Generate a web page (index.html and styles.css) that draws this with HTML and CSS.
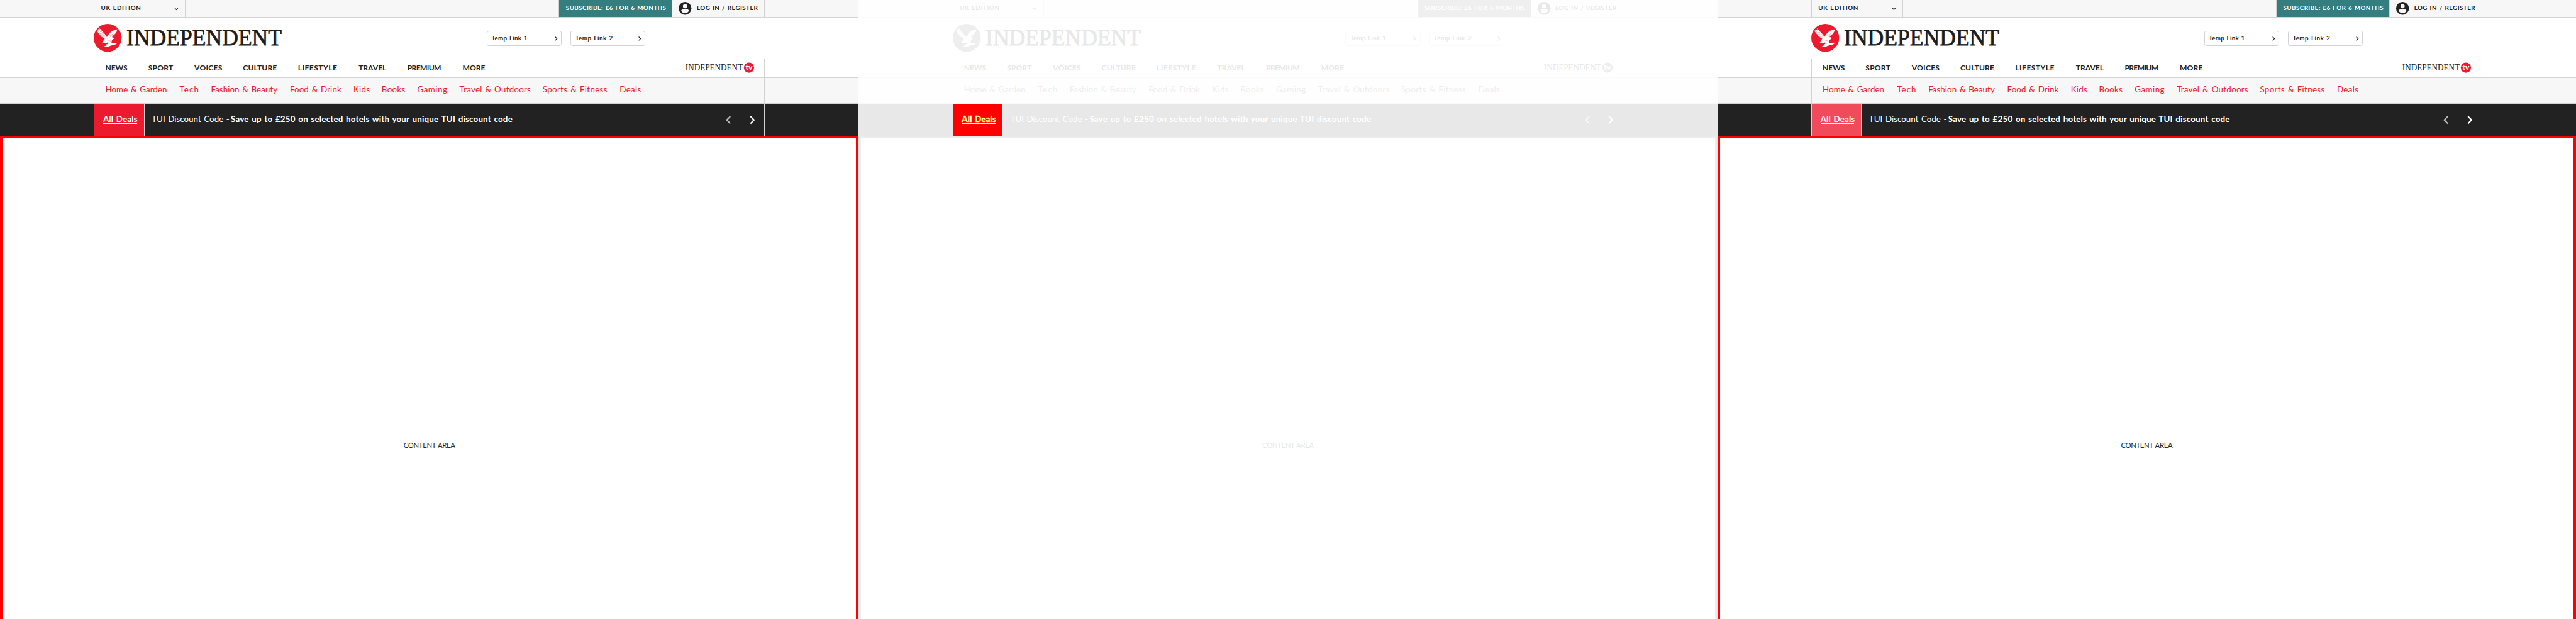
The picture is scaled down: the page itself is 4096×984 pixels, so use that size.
FILE: index.html
```
<!DOCTYPE html>
<html lang="en">
<head>
<meta charset="utf-8">
<title>Independent header</title>
<link rel="stylesheet" href="styles.css">
</head>
<body>
<main class="board">
  <section class="panel">
    <div class="bar topbar"><div class="wrap">
      <div class="edition"><span data-w="73">UK EDITION</span><svg class="chev-down" viewBox="0 0 8 5"><path d="M.8.5 4 4 7.2.5"/></svg></div>
      <div class="subscribe"><span data-w="185.5">SUBSCRIBE: £6 FOR 6 MONTHS</span></div>
      <div class="login">
        <svg class="avatar" viewBox="0 0 24 24"><circle class="disc" cx="12" cy="12" r="12"/><circle class="hole" cx="12" cy="8" r="4"/><path class="hole" d="M4.9 16.6C5 14 9.6 13 12 13s7 1 7.100 3.600C17.600 19.500 15 21 12 21s-5.600-1.500-7.100-4.400z"/></svg>
        <span data-w="112.500">LOG IN / REGISTER</span>
      </div>
    </div></div>
    <div class="bar masthead"><div class="wrap">
      <svg class="logo" viewBox="0 0 352 52">
        <circle class="logo-disc" cx="26" cy="26" r="26"/>
        <path class="eagle" d="M11 8l4 5 4 4 3.500 4 2 3.500 2.500-4 3-3.500 4.500-4L44 10l-1.500 5-3 4-4 3.500L34 25l2 0 2 2-1.500 1-2 1.500L33 33l.5 3 3.500 0 5-1 1 1.500-3 2-6 1.500-6 2-4 1.500-3.500-.5-.5-1.500 4-1.500-1-1.500 3-1 0-3-3 1-7.500-.5 3-2-1.500-1 3-2-1-.5 1.500-2-6-3.500-5-6L6.500 14l1 0L6 11l2.500 2L8 9l3 3.500z"/>
        <path class="feather" d="M9 14l9 12M11 13l9 11M14 14l8 9M29 23l9-6M31 24l7-4M25 30l7 2"/>
        <text class="wordmark" x="61" y="39.300" textLength="289.500" lengthAdjust="spacingAndGlyphs">INDEPENDENT</text>
      </svg>
      <div class="temps">
        <div class="temp"><span data-w="65.500">Temp Link 1</span><svg class="chev" viewBox="0 0 5 8"><path d="M.7.5 4.200 4 .7 7.500"/></svg></div>
        <div class="temp"><span data-w="68.500">Temp Link 2</span><svg class="chev" viewBox="0 0 5 8"><path d="M.7.5 4.200 4 .7 7.500"/></svg></div>
      </div>
    </div></div>
    <div class="bar nav"><div class="wrap">
      <div class="nav-items">
        <span data-w="40">NEWS</span><span data-w="45">SPORT</span><span data-w="50.500">VOICES</span><span data-w="62">CULTURE</span><span data-w="71.500">LIFESTYLE</span><span data-w="50.500">TRAVEL</span><span data-w="61.500">PREMIUM</span><span data-w="41">MORE</span>
      </div>
      <svg class="tv" viewBox="0 0 130 20">
        <text class="tv-word" x="1" y="15.300" textLength="107" lengthAdjust="spacingAndGlyphs">INDEPENDENT</text>
        <circle class="logo-disc" cx="119.500" cy="10" r="9.500"/>
        <text class="tv-mark" x="119.500" y="14.500" text-anchor="middle">tv</text>
      </svg>
    </div></div>
    <div class="bar subnav"><div class="wrap">
      <div class="sub-items">
        <span data-w="113.500">Home &amp; Garden</span><span data-w="34">Tech</span><span data-w="122.500">Fashion &amp; Beauty</span><span data-w="94.500">Food &amp; Drink</span><span data-w="29">Kids</span><span data-w="42.500">Books</span><span data-w="54">Gaming</span><span data-w="131.500">Travel &amp; Outdoors</span><span data-w="119">Sports &amp; Fitness</span><span data-w="38.500">Deals</span>
      </div>
    </div></div>
    <div class="bar deals"><div class="wrap">
      <a class="all-deals"><span data-w="62.500">All Deals</span></a>
      <div class="ticker"><span data-w="143.500">TUI Discount Code -</span><b data-w="525.500">Save up to £250 on selected hotels with your unique TUI discount code</b></div>
      <div class="arrows">
        <svg class="prev" viewBox="0 0 10 16"><path d="M8.500 1.200 1.800 8l6.700 6.800"/></svg>
        <svg class="next" viewBox="0 0 10 16"><path d="M1.500 1.200l6.700 6.800-6.700 6.800"/></svg>
      </div>
    </div></div>
    <div class="content"><span data-w="96">CONTENT AREA</span></div>
  </section>
</main>
<script src="board.js"></script>
</body>
</html>
```
FILE: board.js
```
// One header, three states: default, changed pixels, hover.
const board = document.querySelector('.board');
const base = board.querySelector('.panel');
for (const state of ['diff', 'hover']) {
  const copy = base.cloneNode(true);
  copy.classList.add(state);
  board.append(copy);
}

// Track each label out to its set width, with slightly widened word spaces.
const WORD = 0.09;
const ctx = document.createElement('canvas').getContext('2d');
for (const el of document.querySelectorAll('[data-w]')) {
  const cs = getComputedStyle(el);
  const text = el.textContent;
  ctx.font = `${cs.fontWeight} 100px Lato`;
  const words = text.split(' ').length - 1;
  const em = ctx.measureText(text).width / 100 + words * WORD;
  const size = parseFloat(cs.fontSize);
  const gap = (parseFloat(el.dataset.w) + size * 0.1 - em * size) / (text.length - 1);
  el.style.letterSpacing = `${(gap / size).toFixed(4)}em`;
  el.style.wordSpacing = `${WORD}em`;
}
```
FILE: styles.css
```
* { box-sizing: border-box; }
body { margin: 0; overflow: hidden; background: #fff; }
.board {
  zoom: 0.853333;
  display: flex;
  width: 4800px;
  height: 1154px;
  overflow: hidden;
  font-family: Lato, "Noto Sans", sans-serif;
}
.panel {
  --ink: #222;
  --word: #1d1d1b;
  --red: #ec1a2e;
  --deal: #ec1a2e;
  --frame: #f00;
  --line: #d3d3d3;
  --tint: #f7f7f7;
  --teal: #347e80;
  --dim: #bbb;
  width: 1600px;
  height: 1154px;
  flex: none;
  display: flex;
  flex-direction: column;
  color: var(--ink);
  background: #fff;
  white-space: nowrap;
}
.hover { --deal: #f04a5b; }
.diff {
  --ink: #e8e8e8;
  --word: #e8e8e8;
  --red: #eee;
  --deal: #f00;
  --frame: #ebebeb;
  --line: #fafafa;
  --tint: #fefefe;
  --teal: #efefef;
  --dim: #f7f7f7;
}
svg { display: block; flex: none; overflow: visible; }
.bar { border-bottom: 1px solid var(--line); flex: none; }
.wrap {
  width: 1250px;
  height: 100%;
  margin: 0 auto;
  display: flex;
  border: solid var(--line);
  border-width: 0 1px;
}

.topbar { height: 33px; background: var(--tint); font-weight: 700; font-size: 11.500px; line-height: 30px; }
.edition { width: 169.500px; padding: 0 12px; display: flex; justify-content: space-between; border-right: 1px solid var(--line); }
.chev-down { width: 8px; height: 5px; margin-top: 13.500px; }
.chev-down path, .chev path { fill: none; stroke: var(--ink); stroke-width: 1.500; }
.subscribe { width: 211px; margin-left: auto; padding-left: 12.500px; background: var(--teal); color: #fff; border: solid var(--line); border-width: 0 0 0 1px; }
.login { width: 172px; padding-left: 12px; display: flex; gap: 9.500px; border-left: 1px solid var(--line); }
.avatar { width: 24px; height: 24px; margin-top: 4px; }
.disc { fill: var(--ink); }
.hole { fill: var(--tint); }

.masthead { height: 77px; }
.masthead .wrap { border-color: transparent; justify-content: space-between; padding-right: 221px; }
.logo { width: 352px; height: 52px; margin: 12px 0 0 -1px; }
.logo-disc { fill: var(--red); }
.eagle { fill: #fff; }
.feather { fill: none; stroke: var(--red); stroke-width: 0.400; }
.wordmark { font: 400 41px "Liberation Serif", serif; fill: var(--word); stroke: var(--word); stroke-width: 0.900; }
.temps { display: flex; gap: 16px; margin-top: 25px; }
.temp {
  width: 140px;
  height: 28px;
  padding: 0 7px 0 8px;
  display: flex;
  justify-content: space-between;
  border: 1px solid var(--line);
  border-radius: 4px;
  font-weight: 700;
  font-size: 11.500px;
  line-height: 24.500px;
}
.chev { width: 5px; height: 8px; margin-top: 8.800px; }

.nav { height: 35px; font-weight: 700; font-size: 14.200px; line-height: 32px; }
.nav .wrap { justify-content: space-between; padding: 0 18px 0 20px; }
.nav-items { display: grid; grid-template-columns: 80px 86px 90.500px 102.500px 113px 91px 102.700px 60px; }
.tv { width: 130px; height: 20px; margin-top: 6.500px; }
.tv-word { font: 400 16.500px "Liberation Serif", serif; fill: var(--word); }
.tv-mark { font: 900 14px Lato, sans-serif; fill: #fff; }

.subnav { height: 48px; background: var(--tint); color: var(--red); font-size: 15.700px; line-height: 43px; }
.subnav .wrap { padding-left: 20px; }
.sub-items { display: grid; grid-template-columns: 138.500px 58.500px 147px 118.500px 52.500px 66.500px 78.500px 155px 143.500px auto; }

.deals { height: 60px; border: 0; background: var(--ink); color: #fff; font-size: 15.700px; line-height: 57px; }
.all-deals { width: 93px; padding-left: 16px; background: var(--deal); border-right: 1px solid var(--line); font-weight: 700; }
.all-deals span { display: block; width: 63px; height: 38px; border-bottom: 1px solid #fff; }
.diff .all-deals { -webkit-text-stroke: 0.600px #ff0; }
.ticker { display: grid; grid-template-columns: 147.500px auto; padding-left: 13.500px; }
.arrows { margin-left: auto; display: flex; gap: 34px; padding: 22.500px 17px 0 0; }
.arrows svg { width: 10px; height: 16px; }
.arrows path { fill: none; stroke: #fff; stroke-width: 2.500; }
.arrows .prev path { stroke: var(--dim); }

.content { flex: 1; border: 5px solid var(--frame); border-bottom: 0; font-size: 13.300px; text-align: center; padding-top: 562.500px; line-height: 18px; }
```
